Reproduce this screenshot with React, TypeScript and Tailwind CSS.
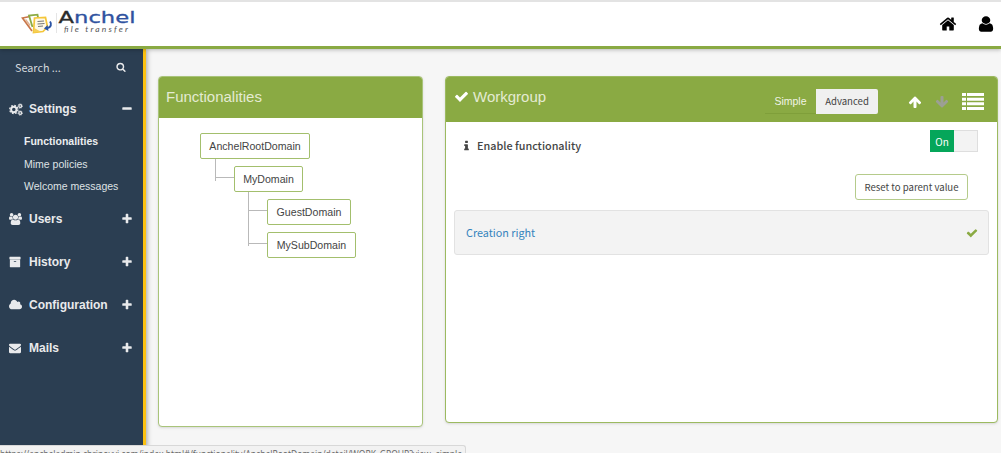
import type { ReactNode } from "react";

const PATHS = {
  home: "M1472 992v480q0 26-19 45t-45 19h-384v-384h-256v384h-384q-26 0-45-19t-19-45v-480q0-1 .5-3t.5-3l575-474 575 474q1 2 1 6zm223-69l-62 74q-8 9-21 11h-3q-13 0-21-7l-692-577-692 577q-12 8-24 7-13-2-21-11l-62-74q-8-10-7-23.5t11-21.5l719-599q32-26 76-26t76 26l244 204v-195q0-14 9-23t23-9h192q14 0 23 9t9 23v408l219 182q10 8 11 21.5t-7 23.5z",
  check: "M1671 566q0 40-28 68l-724 724-136 136q-28 28-68 28t-68-28l-136-136-362-362q-28-28-28-68t28-68l136-136q28-28 68-28t68 28l294 295 656-657q28-28 68-28t68 28l136 136q28 28 28 68z",
  plus: "M1600 736v192q0 40-28 68t-68 28h-416v416q0 40-28 68t-68 28h-192q-40 0-68-28t-28-68v-416h-416q-40 0-68-28t-28-68v-192q0-40 28-68t68-28h416v-416q0-40 28-68t68-28h192q40 0 68 28t28 68v416h416q40 0 68 28t28 68z",
  minus: "M1600 736v192q0 40-28 68t-68 28h-1216q-40 0-68-28t-28-68v-192q0-40 28-68t68-28h1216q40 0 68 28t28 68z",
  search: "M1216 832q0-185-131.5-316.5t-316.5-131.5-316.5 131.5-131.5 316.5 131.5 316.5 316.5 131.5 316.5-131.5 131.5-316.5zm512 832q0 52-38 90t-90 38q-54 0-90-38l-343-342q-179 124-399 124-143 0-273.5-55.5t-225-150-150-225-55.5-273.5 55.5-273.5 150-225 225-150 273.5-55.5 273.5 55.5 225 150 150 225 55.5 273.5q0 220-124 399l343 343q37 37 37 90z",
  arrowUp: "M1675 971q0 51-37 90l-75 75q-38 38-91 38-54 0-90-38l-294-293v704q0 52-37.5 84.5t-90.5 32.5h-128q-53 0-90.5-32.5t-37.5-84.5v-704l-294 293q-36 38-90 38t-90-38l-75-75q-38-38-38-90 0-53 38-91l651-651q35-37 90-37 54 0 91 37l651 651q37 39 37 91z",
  info: "M1216 1344v128q0 26-19 45t-45 19h-512q-26 0-45-19t-19-45v-128q0-26 19-45t45-19h64v-384h-64q-26 0-45-19t-19-45v-128q0-26 19-45t45-19h384q26 0 45 19t19 45v576h64q26 0 45 19t19 45zm-128-1152v192q0 26-19 45t-45 19h-256q-26 0-45-19t-19-45v-192q0-26 19-45t45-19h256q26 0 45 19t19 45z",
  cloud: "M1984 1152q0 159-112.5 271.5t-271.5 112.5h-1088q-185 0-316.5-131.5t-131.5-316.5q0-132 71-241.5t187-163.5q-2-28-2-43 0-212 150-362t362-150q158 0 286.5 88t187.5 230q70-62 166-62 106 0 181 75t75 181q0 75-41 138 129 30 213 134.5t84 239.5z",
  envelope: "M1792 710v794q0 66-47 113t-113 47h-1472q-66 0-113-47t-47-113v-794q44 49 101 87 362 246 497 345 57 42 92.5 65.5t94.5 48 110 24.5h2q51 0 110-24.5t94.5-48 92.5-65.5q170-123 498-345 57-39 100-87zm0-294q0 79-49 151t-122 123q-376 261-468 325-10 7-42.5 31t-54 38.5-52 32.5-57.5 27-50 9h-2q-23 0-50-9t-57.5-27-52-32.5-54-38.5-42.5-31q-91-64-262-182.5t-205-142.5q-62-42-117-115.5t-55-136.5q0-78 41.5-130t118.5-52h1472q65 0 112.5 47t47.5 113z",
  archive: "M1088 832q0-26-19-45t-45-19h-256q-26 0-45 19t-19 45 19 45 45 19h256q26 0 45-19t19-45zm576-192v960q0 26-19 45t-45 19h-1408q-26 0-45-19t-19-45v-960q0-26 19-45t45-19h1408q26 0 45 19t19 45zm64-448v256q0 26-19 45t-45 19h-1536q-26 0-45-19t-19-45v-256q0-26 19-45t45-19h1536q26 0 45 19t19 45z",
  user: "M1536 1399q0 109-62.5 187t-150.5 78h-854q-88 0-150.5-78t-62.5-187q0-85 8.5-160.5t31.5-152 58.5-131 94-89 134.5-34.5q131 128 313 128t313-128q76 0 134.5 34.5t94 89 58.5 131 31.5 152 8.5 160.5zm-256-887q0 159-112.5 271.5t-271.5 112.5-271.5-112.5-112.5-271.5 112.5-271.5 271.5-112.5 271.5 112.5 112.5 271.5z",
  users: "M593 896q-162 5-265 128h-134q-82 0-138-40.5t-56-118.5q0-353 124-353 6 0 43.5 21t97.5 42.5 119 21.5q67 0 133-23-5 37-5 66 0 139 81 256zm1071 637q0 120-73 189.5t-194 69.5h-874q-121 0-194-69.5t-73-189.5q0-53 3.5-103.5t14-109 26.5-108.5 43-97.5 62-81 85.5-53.5 111.5-20q10 0 43 21.5t73 48 107 48 135 21.5 135-21.5 107-48 73-48 43-21.5q61 0 111.5 20t85.5 53.5 62 81 43 97.5 26.5 108.5 14 109 3.5 103.5zm-1024-1277q0 106-75 181t-181 75-181-75-75-181 75-181 181-75 181 75 75 181zm704 384q0 159-112.5 271.5t-271.5 112.5-271.5-112.5-112.5-271.5 112.5-271.5 271.5-112.5 271.5 112.5 112.5 271.5zm576 225q0 78-56 118.5t-138 40.5h-134q-103-123-265-128 81-117 81-256 0-29-5-66 66 23 133 23 59 0 119-21.5t97.5-42.5 43.5-21q124 0 124 353zm-128-609q0 106-75 181t-181 75-181-75-75-181 75-181 181-75 181 75 75 181z",
};

function Icon({ name, className, box = "0 0 1792 1792" }: { name: keyof typeof PATHS; className: string; box?: string }) {
  return (
    <svg viewBox={box} preserveAspectRatio="none" className={`shrink-0 fill-current ${className}`}>
      <path d={PATHS[name]} />
    </svg>
  );
}

function Cogs() {
  return (
    <svg viewBox="0 0 14 13" className="h-[13px] w-[14px]" fill="none" stroke="currentColor">
      <circle cx="4.8" cy="6.5" r="2.7" strokeWidth="1.9" />
      <circle cx="4.8" cy="6.5" r="4.1" strokeWidth="1.3" strokeDasharray="1.7 1.52" />
      <circle cx="11.2" cy="3" r="1.4" strokeWidth="1.2" />
      <circle cx="11.2" cy="3" r="2.2" strokeWidth="0.9" strokeDasharray="0.9 0.83" />
      <circle cx="11.2" cy="10" r="1.4" strokeWidth="1.2" />
      <circle cx="11.2" cy="10" r="2.2" strokeWidth="0.9" strokeDasharray="0.9 0.83" />
    </svg>
  );
}

function LogoMark() {
  return (
    <svg viewBox="0 0 32 22" className="h-[22px] w-8" fill="none">
      <path d="M9 3.500 1.500 5 11 18" stroke="#c9774a" strokeWidth="1.7" />
      <path d="M4.500 6.500 9 12.500" stroke="#e0b394" strokeWidth="1.6" />
      <path d="M17 4.500 16.500 1.700 8 2.500 11.500 14" stroke="#8cab45" strokeWidth="1.8" />
      <path d="M13.500 5 24.500 4.500 26.500 14 22 18.500 12.500 19.500Z" fill="#fff9e6" stroke="#f4c63a" strokeWidth="1.7" />
      <path d="M13.200 15 12.500 19.500 20 18.800Z" fill="#f6cf54" />
      <path d="M16.500 8.500 23 8M16.500 11 23.500 10.500M17 13.500 22 13" stroke="#777" strokeWidth="1" />
      <path d="M29 8.500C31 11 30 14.500 26 15.300" stroke="#2c55a5" strokeWidth="2" />
      <path d="M26.500 12 23 15.500 27.500 18Z" fill="#2c55a5" />
    </svg>
  );
}

function MenuItem({ icon, label, open = false }: { icon: ReactNode; label: string; open?: boolean }) {
  return (
    <div className="flex h-[43px] items-center pb-px pl-[9px] pr-[10px] text-[12px] font-bold">
      <span className="flex w-[20px] items-center">{icon}</span>
      <span className="flex-1 whitespace-nowrap">{label}</span>
      <Icon name={open ? "minus" : "plus"} className="mb-px size-[12px]" />
    </div>
  );
}

function Node({ label, className }: { label: string; className: string }) {
  return (
    <div className={`flex h-[26px] items-center justify-center rounded-[2px] border border-[#a3bf6d] bg-white pt-[2px] text-[10.6px] text-[#444] ${className}`}>
      {label}
    </div>
  );
}

const SOURCE = "font-['Noto_Sans_CJK_SC','Noto_Sans',sans-serif]";

export default function App() {
  return (
    <div className="relative flex h-[453px] w-[1001px] flex-col overflow-hidden bg-[#f6f6f6] font-['Liberation_Sans',Arial,sans-serif]">
      <header className="z-10 flex h-[49px] shrink-0 items-center justify-between border-b-[3px] border-t-2 border-b-[#8aaa43] border-t-[#e3e3e3] bg-white pl-[21px] pr-[5px] shadow-[0_1px_4px_rgba(0,0,0,0.25)]">
        <div className="flex h-full items-start">
          <div className="pt-[11px]"><LogoMark /></div>
          <div className="ml-[3px] mt-[11px] h-[20px] w-px bg-[#e5e5e5]" />
          <div className="ml-px mt-[6px]">
            <svg viewBox="0 0 80 29" className="h-[29px] w-20">
              <text x="0.5" y="14.8" fontFamily="DejaVu Sans" fontSize="15.5" textLength="77" lengthAdjust="spacingAndGlyphs" fill="#2f52a0" stroke="#2f52a0" strokeWidth="0.3">
                <tspan fill="#2b2b2b" stroke="#2b2b2b">A</tspan>nchel
              </text>
              <text x="6" y="24" fontFamily="Lato" fontStyle="italic" fontSize="8.5" textLength="64" fill="#555">file transfer</text>
            </svg>
          </div>
        </div>
        <div className="flex items-center gap-[19px] text-black">
          <Icon name="home" className="size-[18px]" />
          <Icon name="user" className="h-[18px] w-[20px]" />
        </div>
      </header>

      <div className="flex min-h-0 flex-1">
        <aside className="w-[146px] shrink-0 border-r-[3px] border-[#fcc111] bg-[#2b3e52] text-[#e9eaec] shadow-[1px_0_5px_rgba(0,0,0,0.35)]">
          <div className={`flex h-[39px] items-center justify-between pb-[3px] pl-[15px] pr-[17px] text-[10.8px] ${SOURCE}`}>
            <span className="text-[#d3d8dd]">Search ...</span>
            <Icon name="search" className="size-[10px]" />
          </div>
          <MenuItem icon={<Cogs />} label="Settings" open />
          <div className="flex h-[67px] flex-col pl-[24px] text-[10.5px] leading-[22.5px] text-[#dfe2e5]">
            <span className="-mt-px font-bold text-[#eceef0]">Functionalities</span>
            <span>Mime policies</span>
            <span>Welcome messages</span>
          </div>
          <MenuItem icon={<Icon name="users" box="0 0 1920 1792" className="h-[12px] w-[13px]" />} label="Users" />
          <MenuItem icon={<Icon name="archive" className="size-[12px]" />} label="History" />
          <MenuItem icon={<Icon name="cloud" box="64 0 1920 1792" className="h-[12px] w-[13px]" />} label="Configuration" />
          <MenuItem icon={<Icon name="envelope" className="size-[12px]" />} label="Mails" />
        </aside>

        <main className="flex flex-1 items-start gap-[22px] pl-[12px] pt-[27px]">
          <section className="h-[351px] w-[265px] overflow-hidden rounded-[4px] border border-[#a9c47a] bg-white shadow-sm">
            <h2 className="h-[41px] bg-[#8aaa43] pl-[7px] pt-[8px] text-[15px] leading-6 text-[#e4ebd2]">Functionalities</h2>
            <div className="relative h-[300px]">
              <svg className="absolute inset-0 h-[200px] w-full" fill="none" stroke="#b9b9b9">
                <path d="M56.500 40v23M56.500 59.500h20M89.500 72v56M89.500 92.500h21M89.500 125.500h21" />
              </svg>
              <Node label="AnchelRootDomain" className="absolute left-[41px] top-[15px] w-[110px]" />
              <Node label="MyDomain" className="absolute left-[75px] top-[48px] w-[69px]" />
              <Node label="GuestDomain" className="absolute left-[108px] top-[81px] w-[84px]" />
              <Node label="MySubDomain" className="absolute left-[108px] top-[114px] w-[89px]" />
            </div>
          </section>

          <section className="h-[347px] w-[553px] overflow-hidden rounded-[4px] border border-[#9cba60] bg-white shadow-sm">
            <div className="flex h-[45px] items-start bg-[#8aaa43] pl-[8px] pr-[13px]">
              <Icon name="check" className="mt-[12px] size-[15px] text-white" />
              <h2 className="ml-[4px] flex-1 pt-[8px] text-[15px] leading-6 text-[#e4ebd2]">Workgroup</h2>
              <div className="mt-[12px] flex h-[25px] items-center">
                <div className="flex h-full w-[51px] items-center justify-center border-b border-[#7f9f3a] pt-px text-[10.5px] text-[#f0f4e6]">Simple</div>
                <div className={`flex h-full w-[62px] items-center justify-center rounded-r-[2px] bg-[#f0f0f0] pb-px text-[9.6px] text-[#444] ${SOURCE}`}>Advanced</div>
              </div>
              <Icon name="arrowUp" className="ml-[30px] mt-[18px] size-[14px] text-white" />
              <Icon name="arrowUp" className="ml-[13px] mt-[18px] size-[14px] rotate-180 text-[#9c9f94]" />
              <svg viewBox="0 0 22 17" className="ml-[13px] mt-[16px] h-[17px] w-[22px] fill-white">
                <path d="M0 0h4v3H0zM5 0h17v3H5zM0 4.700h4v3H0zM5 4.700h17v3H5zM0 9.300h4v3H0zM5 9.300h17v3H5zM0 14h4v3H0zM5 14h17v3H5z" />
              </svg>
            </div>
            <div className={`px-[8px] ${SOURCE}`}>
              <div className="flex h-[46px] items-start">
                <Icon name="info" className="ml-[6px] mt-[18px] h-[12px] w-[13px] text-[#444]" />
                <span className="ml-[4px] mt-[13px] flex-1 text-[10.8px] font-medium leading-5 text-[#444]">Enable functionality</span>
                <div className="mr-[11px] mt-[8px] flex h-[22px] w-[48px] border border-[#dedede] bg-[#f3f3f3]">
                  <div className="-my-px -ml-px flex h-[22px] w-[24px] items-center justify-center bg-[#05a65a] text-[10px] text-white">On</div>
                </div>
              </div>
              <div className="flex h-[42px] justify-end pr-[21px] pt-[6px]">
                <button className="h-[26px] w-[113px] rounded-[3px] border border-[#b5cb8b] pt-px text-[9.6px] leading-none text-[#444]">Reset to parent value</button>
              </div>
              <div className="flex h-[45px] items-center justify-between rounded-[3px] border border-[#e2e2e2] bg-[#f3f3f3] pl-[11px] pr-[10px]">
                <a className="text-[10.8px] text-[#3584bd]">Creation right</a>
                <Icon name="check" className="size-[12px] text-[#8aaa43]" />
              </div>
            </div>
          </section>
        </main>
      </div>

      <div className="absolute left-0 top-[445px] z-20 h-[20px] w-[466px] overflow-hidden whitespace-nowrap rounded-tr-[3px] border-r border-t border-[#d8d8d8] bg-[#f2f2f2]">
        <svg className="h-[18px] w-[464px]">
          <text x="0" y="11.500" fontFamily="Open Sans" fontSize="11" textLength="462" lengthAdjust="spacingAndGlyphs" fill="#666">
            https://ancheladmin.chrinovvi.com/index.html#/functionality/AnchelRootDomain/detail/WORK_GROUP?view=simple
          </text>
        </svg>
      </div>
    </div>
  );
}
